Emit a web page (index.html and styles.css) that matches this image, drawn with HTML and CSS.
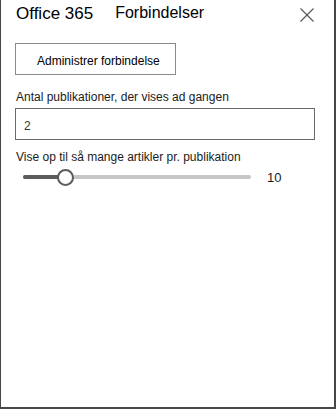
FILE: index.html
```html
<!DOCTYPE html>
<html lang="da">
<head>
    <meta charset="UTF-8">
    <meta name="viewport" content="width=device-width, initial-scale=1.0">
    <title>Forbindelser</title>
    <link rel="stylesheet" href="styles.css">
</head>
<body>
    <div class="panel">
        <div class="panel-header">
            <span class="brand">Office 365</span>
            <h2 class="title">Forbindelser</h2>
            <button class="close" aria-label="Luk">
                <svg width="14" height="14" viewBox="0 0 14 14">
                    <path d="M0.5 0.5 L13.5 13.5 M13.5 0.5 L0.5 13.5" stroke="#555" stroke-width="1.1" fill="none"/>
                </svg>
            </button>
        </div>

        <div class="panel-body">
            <button class="btn">Administrer forbindelse</button>

            <div class="field">
                <label for="count">Antal publikationer, der vises ad gangen</label>
                <input type="text" id="count" value="2">
            </div>

            <div class="field field-slider">
                <label>Vise op til så mange artikler pr. publikation</label>
                <div class="slider-row">
                    <div class="slider">
                        <div class="slider-fill" style="width: 42px;"></div>
                        <div class="slider-thumb" style="left: 42px;"></div>
                    </div>
                    <span class="slider-value">10</span>
                </div>
            </div>
        </div>
    </div>
</body>
</html>
```

FILE: styles.css
```css
body {
    margin: 0;
    font-family: 'Liberation Sans', Arial, sans-serif;
    color: #1b1b1b;
    background: #fff;
}
.panel {
    width: 336px;
    height: 409px;
    box-sizing: border-box;
    border-left: 1px solid #474747;
    border-right: 2px solid #474747;
    border-bottom: 2px solid #474747;
}
.panel-header {
    display: flex;
    align-items: flex-start;
    padding: 2px 20px 0 15px;
}
.brand {
    font-size: 17px;
    line-height: 20px;
    margin-top: 2px;
    color: #000;
}
.title {
    margin: 1px 0 0 22px;
    font-size: 16px;
    line-height: 20px;
    font-weight: normal;
    color: #000;
}
.close {
    margin: 6px 0 0 auto;
    padding: 0;
    border: none;
    background: none;
    width: 14px;
    height: 14px;
    display: block;
    cursor: pointer;
}
.close svg {
    display: block;
}
.panel-body {
    padding: 0 19px 0 14px;
}
.btn {
    display: block;
    margin-top: 19px;
    width: 161px;
    height: 32px;
    box-sizing: border-box;
    border: 1px solid #8a8a8a;
    background: #fff;
    padding: 4px 0 0 21px;
    text-align: left;
    font-family: inherit;
    font-size: 12px;
    line-height: 26px;
    color: #000;
}
.field {
    display: flex;
    flex-direction: column;
    margin-top: 15px;
}
.field label {
    font-size: 12px;
    line-height: 14px;
    padding-left: 1px;
}
.field input[type="text"] {
    margin-top: 4px;
    width: 300px;
    height: 32px;
    box-sizing: border-box;
    border: 1px solid #6a6a6a;
    border-radius: 0;
    padding: 3px 8px 0;
    font-family: inherit;
    font-size: 12px;
    color: #333;
    outline: none;
}
.field-slider {
    margin-top: 10px;
}
.slider-row {
    display: flex;
    align-items: center;
    height: 20px;
    margin-top: 3px;
    padding-left: 8px;
}
.slider {
    position: relative;
    width: 228px;
    height: 4px;
    border-radius: 2px;
    background: #c6c6c6;
}
.slider-fill {
    height: 4px;
    border-radius: 2px;
    background: #5c5c5c;
}
.slider-thumb {
    position: absolute;
    top: -6.5px;
    width: 17px;
    height: 17px;
    margin-left: -8.5px;
    box-sizing: border-box;
    border: 2px solid #5c5c5c;
    border-radius: 50%;
    background: #fff;
}
.slider-value {
    margin-left: 16px;
    font-size: 13px;
    line-height: 15px;
    margin-top: 1px;
}
```
